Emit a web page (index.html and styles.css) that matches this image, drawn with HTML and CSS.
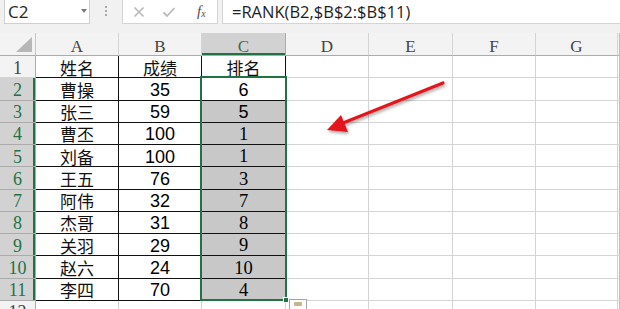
FILE: index.html
```html
<!DOCTYPE html>
<html>
<head>
<meta charset="utf-8">
<link rel="stylesheet" href="styles.css">
</head>
<body>
<div class="bar">
  <div class="namebox"><span>C2</span><span class="dd"></span></div>
  <div class="grip"><i></i><i></i><i></i></div>
  <div class="fxbox">
    <svg class="ico" width="12" height="12" viewBox="0 0 12 12"><path d="M1.5 1.5L10.5 10.5M10.5 1.5L1.5 10.5" stroke="#b9b9b9" stroke-width="1.6" fill="none"/></svg>
    <svg class="ico" width="14" height="12" viewBox="0 0 14 12"><path d="M1.5 6.5L5 10L12.5 2" stroke="#b9b9b9" stroke-width="1.8" fill="none"/></svg>
    <span class="fx">f<sub>x</sub></span>
  </div>
  <div class="formula">=RANK(B2,$B$2:$B$11)</div>
</div>
<div class="sheet">
  <div class="corner"><span class="tri"></span></div>
  <div class="ch">A</div><div class="ch">B</div><div class="ch on">C</div><div class="ch">D</div><div class="ch">E</div><div class="ch">F</div><div class="ch">G</div><div class="ch end"></div>

  <div class="rh">1</div><div class="c t cn">姓名</div><div class="c t cn">成绩</div><div class="c t cn">排名</div><div class="c"></div><div class="c"></div><div class="c"></div><div class="c"></div><div class="c end"></div>
  <div class="rh on">2</div><div class="c t cn">曹操</div><div class="c t num">35</div><div class="c t num">6</div><div class="c"></div><div class="c"></div><div class="c"></div><div class="c"></div><div class="c end"></div>
  <div class="rh on">3</div><div class="c t cn">张三</div><div class="c t num">59</div><div class="c t num sel">5</div><div class="c"></div><div class="c"></div><div class="c"></div><div class="c"></div><div class="c end"></div>
  <div class="rh on">4</div><div class="c t cn">曹丕</div><div class="c t num">100</div><div class="c t ser sel">1</div><div class="c"></div><div class="c"></div><div class="c"></div><div class="c"></div><div class="c end"></div>
  <div class="rh on">5</div><div class="c t cn">刘备</div><div class="c t num">100</div><div class="c t ser sel">1</div><div class="c"></div><div class="c"></div><div class="c"></div><div class="c"></div><div class="c end"></div>
  <div class="rh on">6</div><div class="c t cn">王五</div><div class="c t num">76</div><div class="c t ser sel">3</div><div class="c"></div><div class="c"></div><div class="c"></div><div class="c"></div><div class="c end"></div>
  <div class="rh on">7</div><div class="c t cn">阿伟</div><div class="c t num">32</div><div class="c t ser sel">7</div><div class="c"></div><div class="c"></div><div class="c"></div><div class="c"></div><div class="c end"></div>
  <div class="rh on">8</div><div class="c t cn">杰哥</div><div class="c t num">31</div><div class="c t ser sel">8</div><div class="c"></div><div class="c"></div><div class="c"></div><div class="c"></div><div class="c end"></div>
  <div class="rh on">9</div><div class="c t cn">关羽</div><div class="c t num">29</div><div class="c t ser sel">9</div><div class="c"></div><div class="c"></div><div class="c"></div><div class="c"></div><div class="c end"></div>
  <div class="rh on">10</div><div class="c t cn">赵六</div><div class="c t num">24</div><div class="c t ser sel">10</div><div class="c"></div><div class="c"></div><div class="c"></div><div class="c"></div><div class="c end"></div>
  <div class="rh on">11</div><div class="c t cn">李四</div><div class="c t num">70</div><div class="c t ser sel">4</div><div class="c"></div><div class="c"></div><div class="c"></div><div class="c"></div><div class="c end"></div>
  <div class="rh">12</div><div class="c"></div><div class="c"></div><div class="c"></div><div class="c"></div><div class="c"></div><div class="c"></div><div class="c"></div><div class="c end"></div>
</div>

<div class="selection"></div>
<div class="handle"></div>
<div class="paste"><span class="clip"></span></div>

<svg class="arrow" width="620" height="309" viewBox="0 0 620 309">
  <defs>
    <filter id="sh" x="-20%" y="-20%" width="140%" height="140%">
      <feDropShadow dx="1" dy="2" stdDeviation="1.5" flood-color="#000" flood-opacity="0.35"/>
    </filter>
  </defs>
  <g filter="url(#sh)">
    <line x1="443" y1="83" x2="338" y2="125" stroke="#e3161b" stroke-width="3.2" stroke-linecap="round"/>
    <polygon points="327,130 341,115 348,132" fill="#e3161b"/>
  </g>
</svg>
</body>
</html>
```

FILE: styles.css
```css
* { box-sizing: border-box; }
html, body { margin: 0; padding: 0; }
body {
  width: 620px;
  height: 309px;
  overflow: hidden;
  position: relative;
  background: #ffffff;
  font-family: "Liberation Sans", sans-serif;
}

/* formula bar */
.bar {
  display: flex;
  height: 33px;
  padding: 0 0 9px 4px;
  background: #f1f1f1;
}
.namebox {
  width: 86px;
  background: #fff;
  border: 1px solid #cfcfcf;
  border-top: 0;
  display: flex;
  align-items: center;
  justify-content: space-between;
  padding: 0 2px 0 3px;
  font: 17px "Open Sans", sans-serif;
  color: #262626;
}
.dd {
  width: 0; height: 0;
  border-left: 3.5px solid transparent;
  border-right: 3.5px solid transparent;
  border-top: 4px solid #7a7a7a;
  margin-bottom: 2px;
}
.grip {
  width: 32px;
  display: flex;
  flex-direction: column;
  align-items: center;
  justify-content: center;
  gap: 2px;
  padding-bottom: 2px;
}
.grip i {
  display: block;
  width: 2px; height: 2px;
  background: #a8a8a8;
}
.fxbox {
  width: 96px;
  background: #fff;
  border: 1px solid #d4d4d4;
  border-top: 0;
  display: flex;
  align-items: center;
  padding-left: 10px;
  gap: 17px;
}
.fx {
  font: italic 15px "Liberation Serif", serif;
  color: #505050;
  margin-left: 4px;
}
.fx sub { font-size: 10px; vertical-align: -1px; }
.formula {
  flex: 1;
  margin-left: 4px;
  background: #fff;
  border: 1px solid #d4d4d4;
  border-top: 0;
  border-right: 0;
  padding-left: 9px;
  display: flex;
  align-items: center;
  font: 16.5px "Open Sans", sans-serif;
  color: #1e1e1e;
}

/* sheet */
.sheet {
  display: grid;
  grid-template-columns: 36px 83px 83px 84px 83px 84px 83px 82px 2px;
  grid-template-rows: 23px repeat(12, 22.25px);
}
.sheet > div {
  display: flex;
  align-items: center;
  justify-content: center;
  overflow: hidden;
  white-space: nowrap;
  line-height: 1;
}
.corner {
  background: #f3f3f3;
  border-right: 1px solid #c6c6c6;
  border-bottom: 1px solid #ababab;
  position: relative;
}
.tri {
  position: absolute;
  right: 3px;
  bottom: 3px;
  width: 0; height: 0;
  border-left: 16px solid transparent;
  border-bottom: 15px solid #b7b7b7;
}
.ch {
  background: #f3f3f3;
  border-right: 1px solid #d4d4d4;
  border-bottom: 1px solid #ababab;
  font: 17px "Liberation Serif", serif;
  color: #444;
  padding-top: 4px;
}
.ch.on {
  background: #d2d2d2;
  color: #3d6b55;
  border-right-color: #ababab;
  box-shadow: inset 0 -2px 0 #217346;
}
.ch.end { border-right: 1px solid #c0c0c0; }
.rh {
  background: #f3f3f3;
  border-right: 1px solid #ababab;
  border-bottom: 1px solid #d4d4d4;
  font: 18px "Liberation Serif", serif;
  color: #444;
  padding-top: 2px;
}
.rh.on {
  background: #d2d2d2;
  color: #217346;
  border-bottom-color: #ababab;
  box-shadow: inset -2px 0 0 #217346;
}
.c {
  border-right: 1px solid #d4d4d4;
  border-bottom: 1px solid #d4d4d4;
  color: #000;
}
.c.end { border-right: 1px solid #c0c0c0; }
.c.t {
  border-right-color: #111;
  border-bottom-color: #111;
}
.cn {
  font: 17px "Noto Sans CJK SC", sans-serif;
  color: #111;
  padding-top: 1px;
}
.num {
  font: 18px "Liberation Sans", sans-serif;
  padding-top: 2px;
}
.ser {
  font: 18.5px "Liberation Serif", serif;
  padding-top: 2px;
}
.sel { background: #c8c8c8; }

/* overlays */
.selection {
  position: absolute;
  left: 200px;
  top: 76px;
  width: 87px;
  height: 225px;
  border: 2px solid #217346;
  pointer-events: none;
}
.handle {
  position: absolute;
  left: 283px;
  top: 297px;
  width: 6px;
  height: 6px;
  background: #217346;
  border: 1px solid #fff;
}
.paste {
  position: absolute;
  left: 289px;
  top: 299px;
  width: 18px;
  height: 16px;
  background: #fff;
  border: 1px solid #a6a6a6;
}
.clip {
  position: absolute;
  left: 4px;
  top: 2px;
  width: 8px;
  height: 4px;
  background: #c9b58a;
  border-radius: 1px;
}
.arrow {
  position: absolute;
  left: 0;
  top: 0;
  pointer-events: none;
}
```
